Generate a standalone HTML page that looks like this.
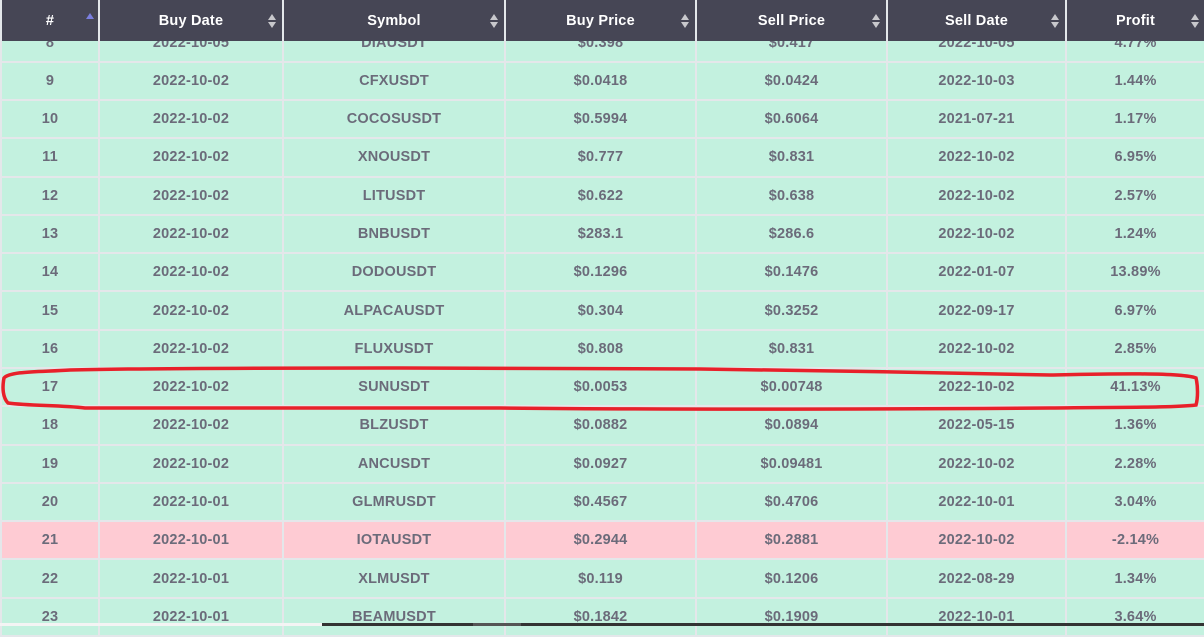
<!DOCTYPE html>
<html><head><style>
*{margin:0;padding:0;box-sizing:border-box}
body{width:1204px;height:626px;overflow:hidden;background:#e4e7ea;font-family:"Liberation Sans",sans-serif;position:relative}
.row{position:absolute;left:0;width:1204px;height:38.29px}
.c{position:absolute;top:0;height:36.29px;display:flex;align-items:center;justify-content:center;font-weight:bold;font-size:14.5px;letter-spacing:0.2px;color:#6b6b7a;background:#c3f1df}
.pink .c{background:#fecbd3}
.hdr{position:absolute;left:0;top:0;width:1204px;height:41px;background:#e4e7ea;z-index:2}
.h{position:absolute;top:0;height:41px;background:#464655;color:#fff;font-weight:bold;font-size:14.5px;letter-spacing:0.2px;display:flex;align-items:center;justify-content:center}
.s{position:absolute;top:14px;width:8px;height:14px}
</style></head><body>
<div class="hdr">
<div class="h" style="left:2px;width:96px">#<svg class="s" style="left:84px;top:12px" viewBox="0 0 8 14"><path d="M0 7 L4 1 L8 7Z" fill="#7b7fe0"/></svg></div>
<div class="h" style="left:100px;width:182px">Buy Date<svg class="s" style="left:168px" viewBox="0 0 8 14"><path d="M0 6 L4 0 L8 6Z M0 8 L4 14 L8 8Z" fill="#c8c8cc"/></svg></div>
<div class="h" style="left:284px;width:220px">Symbol<svg class="s" style="left:206px" viewBox="0 0 8 14"><path d="M0 6 L4 0 L8 6Z M0 8 L4 14 L8 8Z" fill="#c8c8cc"/></svg></div>
<div class="h" style="left:506px;width:189px">Buy Price<svg class="s" style="left:175px" viewBox="0 0 8 14"><path d="M0 6 L4 0 L8 6Z M0 8 L4 14 L8 8Z" fill="#c8c8cc"/></svg></div>
<div class="h" style="left:697px;width:189px">Sell Price<svg class="s" style="left:175px" viewBox="0 0 8 14"><path d="M0 6 L4 0 L8 6Z M0 8 L4 14 L8 8Z" fill="#c8c8cc"/></svg></div>
<div class="h" style="left:888px;width:177px">Sell Date<svg class="s" style="left:163px" viewBox="0 0 8 14"><path d="M0 6 L4 0 L8 6Z M0 8 L4 14 L8 8Z" fill="#c8c8cc"/></svg></div>
<div class="h" style="left:1067px;width:137px">Profit<svg class="s" style="left:124px" viewBox="0 0 8 14"><path d="M0 6 L4 0 L8 6Z M0 8 L4 14 L8 8Z" fill="#c8c8cc"/></svg></div>
</div>
<div id="rows"></div>
<script>
var d=[
["8","2022-10-05","DIAUSDT","$0.398","$0.417","2022-10-05","4.77%"],
["9","2022-10-02","CFXUSDT","$0.0418","$0.0424","2022-10-03","1.44%"],
["10","2022-10-02","COCOSUSDT","$0.5994","$0.6064","2021-07-21","1.17%"],
["11","2022-10-02","XNOUSDT","$0.777","$0.831","2022-10-02","6.95%"],
["12","2022-10-02","LITUSDT","$0.622","$0.638","2022-10-02","2.57%"],
["13","2022-10-02","BNBUSDT","$283.1","$286.6","2022-10-02","1.24%"],
["14","2022-10-02","DODOUSDT","$0.1296","$0.1476","2022-01-07","13.89%"],
["15","2022-10-02","ALPACAUSDT","$0.304","$0.3252","2022-09-17","6.97%"],
["16","2022-10-02","FLUXUSDT","$0.808","$0.831","2022-10-02","2.85%"],
["17","2022-10-02","SUNUSDT","$0.0053","$0.00748","2022-10-02","41.13%"],
["18","2022-10-02","BLZUSDT","$0.0882","$0.0894","2022-05-15","1.36%"],
["19","2022-10-02","ANCUSDT","$0.0927","$0.09481","2022-10-02","2.28%"],
["20","2022-10-01","GLMRUSDT","$0.4567","$0.4706","2022-10-01","3.04%"],
["21","2022-10-01","IOTAUSDT","$0.2944","$0.2881","2022-10-02","-2.14%"],
["22","2022-10-01","XLMUSDT","$0.119","$0.1206","2022-08-29","1.34%"],
["23","2022-10-01","BEAMUSDT","$0.1842","$0.1909","2022-10-01","3.64%"]];
var L=[2,100,284,506,697,888,1067],W=[96,182,220,189,189,177,137],h="";
d.forEach(function(r,i){h+='<div class="row'+(r[0]=="21"?' pink':'')+'" style="top:'+(24.4+i*38.29)+'px">';
r.forEach(function(t,j){h+='<div class="c" style="left:'+L[j]+'px;width:'+W[j]+'px">'+t+'</div>'});h+='</div>'});
document.getElementById('rows').innerHTML=h;
</script>
<div style="position:absolute;left:0;top:623px;width:1204px;height:3px;background:#f4f4f4;z-index:3"></div>
<div style="position:absolute;left:322px;top:623px;width:882px;height:3px;background:#333;z-index:3"></div>
<div style="position:absolute;left:473px;top:623px;width:48px;height:3px;background:#555;z-index:3"></div>
<svg style="position:absolute;left:0;top:0;z-index:4" width="1204" height="626">
<path d="M70 370 C40 372 10 371 4 378 C2 388 3 398 8 403 C30 406 60 405 85 408 L200 408 L500 408 C700 410 900 409 1050 408 C1110 407 1170 408 1196 405 C1198 398 1198 386 1196 378 C1180 372 1100 374 1050 375 C950 373 800 370 700 369 L400 368 C300 368 150 368 70 370 Z" fill="none" stroke="#e8202a" stroke-width="3.5"/>
</svg>
</body></html>
